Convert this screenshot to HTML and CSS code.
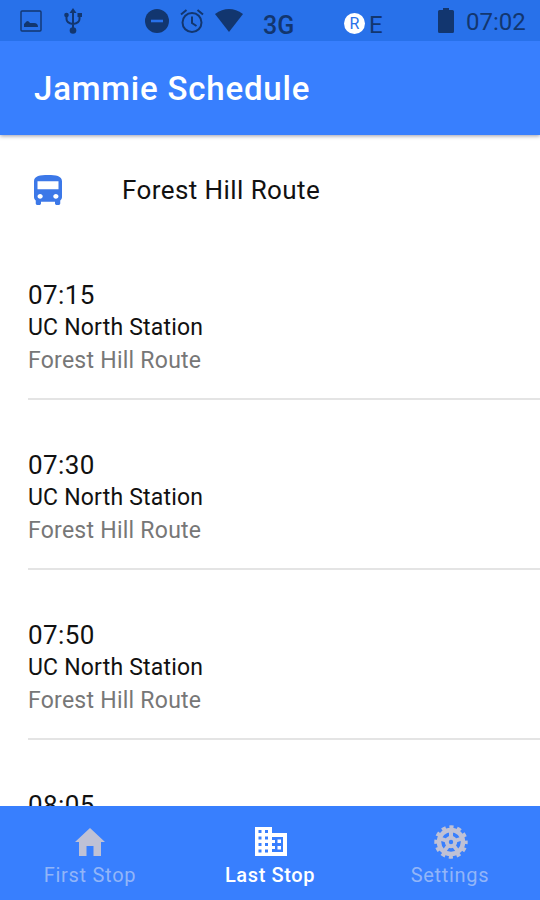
FILE: index.html
```html
<!DOCTYPE html>
<html lang="en">

<head>
  <meta charset="utf-8">
  <title>Jammie Schedule</title>
  <link rel="stylesheet" href="styles.css">
</head>

<body>
  <div class="status-bar">
    <svg class="icon-image" viewBox="0 0 22 22">
      <rect x="1" y="1" width="20" height="20" rx="1" fill="none" stroke="currentColor" stroke-width="1.4" />
      <path d="M4 17v-3l3-3q2 0 3 2h4q4 0 4 4z" fill="currentColor" />
    </svg>
    <svg class="icon-usb" viewBox="0 0 18 26">
      <path d="M9 4v18M2.500 7v4q0 4 6.500 5M15.500 7v4q0 4-6.500 5" fill="none" stroke="currentColor" stroke-width="2" />
      <path d="M9 0l3.500 5h-7z" fill="currentColor" />
      <circle cx="9" cy="22.500" r="3.300" fill="currentColor" />
      <circle cx="2.500" cy="7" r="2.300" fill="currentColor" />
      <path d="M13.500 5H18v4h-4.500z" fill="currentColor" />
    </svg>
    <svg class="icon-dnd" viewBox="0 0 24 24">
      <circle cx="12" cy="12" r="12" fill="currentColor" />
      <path d="M6 12h12" stroke="#2871ea" stroke-width="2.600" />
    </svg>
    <svg class="icon-alarm" viewBox="0 0 24 24">
      <g fill="none" stroke="currentColor" stroke-width="2">
        <circle cx="12" cy="13.500" r="9.500" />
        <path d="M12 7.500v6.500l4.500 3M1 5.500L6.500 1M23 5.500L17.500 1" />
      </g>
    </svg>
    <svg class="icon-wifi" viewBox="0 0 28 23">
      <path d="M0 5Q14-5 28 5L14 23z" fill="currentColor" />
    </svg>
    <span class="network">3G</span>
    <span class="registered">R</span>
    <span class="edge">E</span>
    <svg class="icon-battery" viewBox="0 0 16 25">
      <path d="M5 0h6v2h3.500q1.500 0 1.500 1.500v20q0 1.500-1.500 1.500h-13Q0 25 0 23.500v-20Q0 2 1.500 2H5z" fill="currentColor" />
    </svg>
    <span class="clock">07:02</span>
  </div>

  <header>
    <h1>Jammie Schedule</h1>
  </header>

  <main>
    <div class="route">
      <svg viewBox="4 2 16 19" preserveAspectRatio="none">
        <path fill="currentColor" d="M4 16c0 .88.39 1.670 1 2.220V20c0 .55.45 1 1 1h1c.55 0 1-.45 1-1v-1h8v1c0 .55.45 1 1 1h1c.55 0 1-.45 1-1v-1.780c.61-.55 1-1.340 1-2.220V6c0-3.500-3.580-4-8-4s-8 .5-8 4v10zm3.500 1c-.83 0-1.500-.67-1.500-1.500S6.670 14 7.500 14s1.500.67 1.500 1.500S8.330 17 7.500 17zm9 0c-.83 0-1.500-.67-1.500-1.500s.67-1.500 1.500-1.500 1.500.67 1.500 1.500-.67 1.500-1.500 1.500zm1.500-6H6V6h12v5z" />
      </svg>
      <span>Forest Hill Route</span>
    </div>

    <div class="item">
      <h2>07:15</h2>
      <h3>UC North Station</h3>
      <p>Forest Hill Route</p>
    </div>
    <div class="item">
      <h2>07:30</h2>
      <h3>UC North Station</h3>
      <p>Forest Hill Route</p>
    </div>
    <div class="item">
      <h2>07:50</h2>
      <h3>UC North Station</h3>
      <p>Forest Hill Route</p>
    </div>
    <div class="item">
      <h2>08:05</h2>
    </div>
  </main>

  <nav>
    <a class="tab">
      <svg viewBox="0 0 30 30">
        <path d="M15 1l15 14h-4v14h-7.500V19h-7v10H4V15H0z" fill="#bfc1d5" />
      </svg>
      <span>First Stop</span>
    </a>
    <a class="tab active">
      <svg class="building" viewBox="0 0 32 29">
        <path d="M0 0h17v6h15v23H0z" fill="#fff" />
        <path d="M3.500 3h3v3h-3zM3.500 9.500h3v3h-3zM3.500 16h3v3h-3zM3.500 22.500h3v3h-3zM10 3h3v3h-3zM10 9.500h3v3h-3zM10 16h3v3h-3zM10 22.500h3v3h-3z" fill="#387ffe" />
        <path d="M17 10h11v15H17v-3h3v-3h-3v-3h3v-3h-3z" fill="#387ffe" />
        <path d="M22.500 12.500H26v3.500h-3.500zM22.500 19H26v3.500h-3.500z" fill="#fff" />
      </svg>
      <span>Last Stop</span>
    </a>
    <a class="tab">
      <svg class="gear" viewBox="-17 -17 34 34">
        <circle r="12" fill="none" stroke="#bfc1d5" stroke-width="4.500" />
        <circle r="15" fill="none" stroke="#bfc1d5" stroke-width="3.400" stroke-dasharray="4.200 3.654" stroke-dashoffset="2.100" />
        <circle r="4.200" fill="none" stroke="#bfc1d5" stroke-width="4" />
        <path d="M0-4v-7M3.800-1.200l6.700-2.200M2.400 3.200l4.100 5.700M-2.400 3.200l-4.100 5.700M-3.800-1.200l-6.700-2.200" stroke="#bfc1d5" stroke-width="4" />
      </svg>
      <span>Settings</span>
    </a>
  </nav>
</body>

</html>
```
FILE: styles.css
```css
* {
  box-sizing: border-box;
}

body {
  display: flex;
  flex-direction: column;
  height: 900px;
  margin: 0;
  overflow: hidden;
  font-family: Roboto, sans-serif;
  color: #111;
  background-color: #fff;
}

h1,
h2,
h3,
p {
  margin: 0;
  font-weight: 400;
}

svg {
  display: block;
  flex: none;
}

.status-bar {
  position: relative;
  z-index: 1;
  display: flex;
  flex: none;
  height: 41px;
  padding: 0 14px 0 20px;
  align-items: center;
  color: #12366f;
  background-color: #2871ea;
}

.icon-image {
  width: 22px;
  height: 22px;
}

.icon-usb {
  width: 18px;
  height: 26px;
  margin-left: 22px;
}

.icon-dnd {
  width: 24px;
  height: 24px;
  margin-left: 63px;
}

.icon-alarm {
  width: 24px;
  height: 24px;
  margin-left: 11px;
}

.icon-wifi {
  width: 28px;
  height: 23px;
  margin-left: 11px;
}

.network {
  width: 32px;
  margin: 10px 0 0 20px;
  font-size: 25px;
  font-weight: 500;
}

.registered {
  width: 21px;
  height: 21px;
  margin: 5px 0 0 49px;
  border-radius: 50%;
  font-size: 16px;
  line-height: 21px;
  text-align: center;
  color: #2871ea;
  background-color: #fff;
}

.edge {
  width: 14px;
  margin: 9px 0 0 4px;
  font-size: 24px;
}

.icon-battery {
  width: 16px;
  height: 25px;
  margin-left: 55px;
}

.clock {
  margin: 2px 0 0 12px;
  font-size: 24px;
}

header {
  position: relative;
  flex: none;
  height: 94px;
  padding: 27px 34px 0;
  color: #fff;
  background-color: #387ffe;
  box-shadow: 0 1px 4px rgba(0, 0, 40, 0.4);
}

h1 {
  font-size: 33px;
  font-weight: 500;
  line-height: 41px;
  letter-spacing: 0.8px;
}

main {
  flex: 1;
  min-height: 0;
  overflow: hidden;
}

.route {
  display: flex;
  align-items: center;
  height: 95px;
  padding: 15px 0 0 34px;
  font-size: 26px;
  letter-spacing: 0.42px;
}

.route svg {
  width: 28px;
  height: 30px;
  margin-right: 60px;
  color: #3c78e8;
}

.item {
  height: 170px;
  margin-left: 28px;
  padding-top: 49px;
  border-bottom: 2px solid #e4e4e4;
}

h2 {
  font-size: 26px;
  line-height: 32px;
  letter-spacing: 0.4px;
}

h3 {
  font-size: 23px;
  line-height: 33px;
  letter-spacing: 0.2px;
}

p {
  font-size: 23px;
  line-height: 34px;
  letter-spacing: 0.25px;
  color: #777;
}

nav {
  display: flex;
  flex: none;
  height: 94px;
  background-color: #387ffe;
}

.tab {
  display: flex;
  flex: 1;
  flex-direction: column;
  align-items: center;
  padding-top: 20px;
  font-size: 20px;
  line-height: 26px;
  letter-spacing: 0.7px;
  color: #92b5f8;
}

.tab svg {
  width: 30px;
  height: 30px;
  margin: 1px 0 5px;
}

.tab .building {
  width: 32px;
  height: 29px;
  margin: 1px 0 6px 2px;
}

.tab .gear {
  width: 34px;
  height: 34px;
  margin: -1px 0 3px 2px;
}

.tab.active {
  font-weight: 500;
  letter-spacing: 0.6px;
  color: #fff;
}
```
